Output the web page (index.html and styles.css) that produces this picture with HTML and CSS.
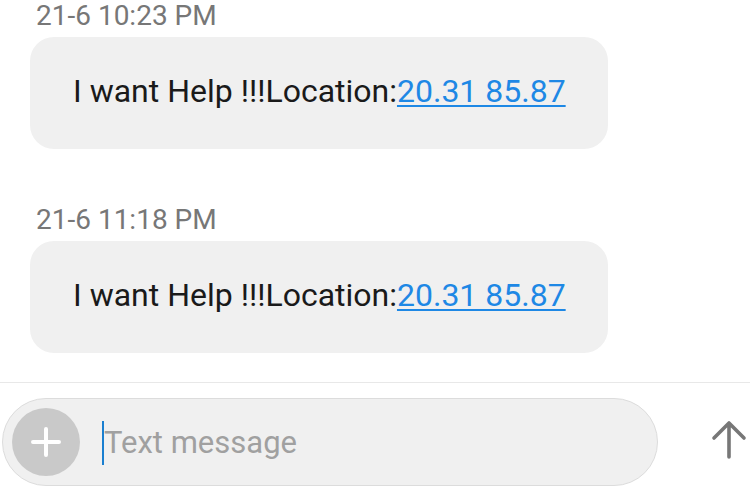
FILE: index.html
```html
<!DOCTYPE html>
<html>
<head>
<meta charset="utf-8">
<link rel="stylesheet" href="styles.css">
</head>
<body>
<div class="screen">
  <div class="thread">
    <div class="group">
      <div class="stamp">21-6 10:23 PM</div>
      <div class="bubble">I want Help !!!Location:<a class="link" href="#">20.31 85.87</a></div>
    </div>
    <div class="group">
      <div class="stamp">21-6 11:18 PM</div>
      <div class="bubble">I want Help !!!Location:<a class="link" href="#">20.31 85.87</a></div>
    </div>
  </div>
  <div class="composer">
    <div class="pill">
      <div class="add">
        <svg width="30" height="30" viewBox="0 0 30 30"><path d="M15 2 V28 M2 15 H28" stroke="#fff" stroke-width="4" stroke-linecap="round" fill="none"/></svg>
      </div>
      <div class="field"><span class="cursor"></span><span class="placeholder">Text message</span></div>
    </div>
    <div class="send">
      <svg width="36" height="40" viewBox="0 0 36 40"><path d="M18 37 V4 M3 18 L18 3 L33 18" stroke="#777" stroke-width="3.6" stroke-linecap="round" stroke-linejoin="round" fill="none"/></svg>
    </div>
  </div>
</div>
</body>
</html>
```
FILE: styles.css
```css
html, body {
  margin: 0;
  padding: 0;
  background: #ffffff;
}
.screen {
  width: 750px;
  height: 490px;
  overflow: hidden;
  font-family: Roboto, "Noto Sans", sans-serif;
}
.thread {
  height: 382px;
  padding-left: 30px;
  padding-top: 1px;
  box-sizing: border-box;
  display: flex;
  flex-direction: column;
  gap: 56px;
}
.group {
  display: flex;
  flex-direction: column;
  align-items: flex-start;
}
.stamp {
  font-size: 28px;
  line-height: 30px;
  color: #777777;
  margin-left: 6px;
  margin-bottom: 6px;
}
.bubble {
  background: #f0f0f0;
  border-radius: 24px;
  font-size: 32px;
  line-height: 40px;
  color: #1a1a1a;
  padding: 34px 42px 38px 43px;
  white-space: nowrap;
}
.link {
  color: #1e88e5;
  text-decoration: underline;
  text-decoration-thickness: 2px;
  text-underline-offset: 3px;
}
.composer {
  border-top: 1px solid #e8e8e8;
  display: flex;
  align-items: center;
  padding: 15px 0 0 2px;
}
.pill {
  width: 656px;
  height: 88px;
  box-sizing: border-box;
  border: 1px solid #dcdcdc;
  background: #f0f0f0;
  border-radius: 44px;
  display: flex;
  align-items: center;
  padding-left: 9px;
}
.add {
  width: 68px;
  height: 68px;
  border-radius: 50%;
  background: #c9c9c9;
  display: flex;
  align-items: center;
  justify-content: center;
}
.field {
  display: flex;
  align-items: center;
  margin-left: 22px;
  margin-top: 1px;
}
.cursor {
  width: 2px;
  height: 44px;
  background: #1a7fd0;
}
.placeholder {
  font-size: 31px;
  line-height: 40px;
  color: #a0a0a0;
}
.send {
  margin-left: 53px;
  display: flex;
  align-items: center;
  margin-top: -5px;
}
```
